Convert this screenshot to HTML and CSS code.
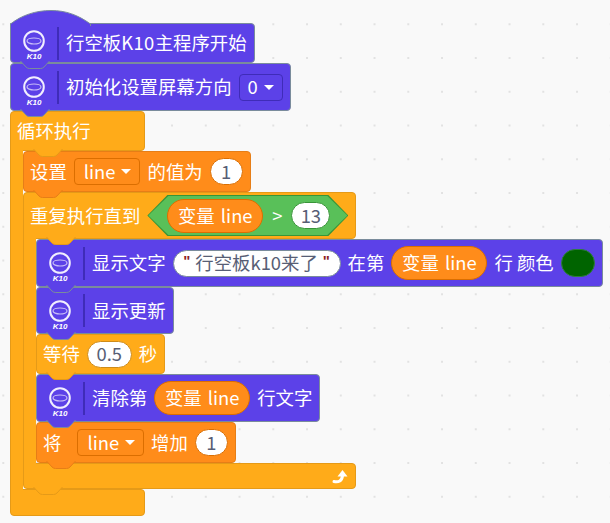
FILE: index.html
```html
<!DOCTYPE html>
<html lang="en">
<head>
    <meta charset="UTF-8">
    <title>K10</title>
    <link rel="stylesheet" href="styles.css">
</head>
<body>
<main class="stage">
    <div class="block purple hat h40">
        <svg class="hat-top" width="82" height="16" viewBox="0 0 82 16"><path d="M.5 16V14C12 5 26 .5 41 .5S68 5 80.5 14V16"/></svg>
        <span class="k10 k10-hat"><svg width="22" height="22" viewBox="0 0 22 22"><circle cx="11" cy="11" r="9.8"/><ellipse cx="11" cy="11" rx="7" ry="3"/></svg><i>K10</i></span>
        <span class="sep"></span>
        <span>行空板<span class="wide">K10</span>主程序开始</span>
        <svg class="bump" width="30" height="8" viewBox="0 0 30 8"><path d="M.5 0L6 6Q7.5 7.5 9.5 7.5H20.5Q22.5 7.5 24 6L29.5 0"/></svg>
    </div>
    <div class="block purple h48">
        <span class="k10"><svg width="22" height="22" viewBox="0 0 22 22"><circle cx="11" cy="11" r="9.8"/><ellipse cx="11" cy="11" rx="7" ry="3"/></svg><i>K10</i></span>
        <span class="sep"></span>
        <span>初始化设置屏幕方向</span>
        <span class="drop drop-short">0</span>
        <svg class="bump" width="30" height="8" viewBox="0 0 30 8"><path d="M.5 0L6 6Q7.5 7.5 9.5 7.5H20.5Q22.5 7.5 24 6L29.5 0"/></svg>
    </div>

    <div class="loop">
        <div class="block yellow head h40 w-loop">
            <span>循环执行</span>
            <svg class="bump bump-in" width="30" height="8" viewBox="0 0 30 8"><path d="M.5 0L6 6Q7.5 7.5 9.5 7.5H20.5Q22.5 7.5 24 6L29.5 0"/></svg>
        </div>
        <div class="arm">
            <div class="block orange h41">
                <span>设置</span>
                <span class="drop">line</span>
                <span>的值为</span>
                <span class="num n-one">1</span>
                <svg class="bump" width="30" height="8" viewBox="0 0 30 8"><path d="M.5 0L6 6Q7.5 7.5 9.5 7.5H20.5Q22.5 7.5 24 6L29.5 0"/></svg>
            </div>
            <div class="loop">
                <div class="block yellow head h47 w-repeat">
                    <span>重复执行直到</span>
                    <span class="hex">
                        <span class="var">变量 line</span>
                        <span class="gt">&gt;</span>
                        <span class="num n-13">13</span>
                    </span>
                    <svg class="bump bump-in" width="30" height="8" viewBox="0 0 30 8"><path d="M.5 0L6 6Q7.5 7.5 9.5 7.5H20.5Q22.5 7.5 24 6L29.5 0"/></svg>
                </div>
                <div class="arm">
                    <div class="block purple h48">
                        <span class="k10"><svg width="22" height="22" viewBox="0 0 22 22"><circle cx="11" cy="11" r="9.8"/><ellipse cx="11" cy="11" rx="7" ry="3"/></svg><i>K10</i></span>
                        <span class="sep"></span>
                        <span>显示文字</span>
                        <span class="num str"><b>"</b>行空板k10来了<b>"</b></span>
                        <span>在第</span>
                        <span class="var">变量 line</span>
                        <span>行 颜色</span>
                        <span class="swatch"></span>
                        <svg class="bump" width="30" height="8" viewBox="0 0 30 8"><path d="M.5 0L6 6Q7.5 7.5 9.5 7.5H20.5Q22.5 7.5 24 6L29.5 0"/></svg>
                    </div>
                    <div class="block purple h47">
                        <span class="k10"><svg width="22" height="22" viewBox="0 0 22 22"><circle cx="11" cy="11" r="9.8"/><ellipse cx="11" cy="11" rx="7" ry="3"/></svg><i>K10</i></span>
                        <span class="sep"></span>
                        <span>显示更新</span>
                        <svg class="bump" width="30" height="8" viewBox="0 0 30 8"><path d="M.5 0L6 6Q7.5 7.5 9.5 7.5H20.5Q22.5 7.5 24 6L29.5 0"/></svg>
                    </div>
                    <div class="block yellow h40">
                        <span>等待</span>
                        <span class="num n-half">0.5</span>
                        <span>秒</span>
                        <svg class="bump" width="30" height="8" viewBox="0 0 30 8"><path d="M.5 0L6 6Q7.5 7.5 9.5 7.5H20.5Q22.5 7.5 24 6L29.5 0"/></svg>
                    </div>
                    <div class="block purple h48">
                        <span class="k10"><svg width="22" height="22" viewBox="0 0 22 22"><circle cx="11" cy="11" r="9.8"/><ellipse cx="11" cy="11" rx="7" ry="3"/></svg><i>K10</i></span>
                        <span class="sep"></span>
                        <span>清除第</span>
                        <span class="var">变量 line</span>
                        <span>行文字</span>
                        <svg class="bump" width="30" height="8" viewBox="0 0 30 8"><path d="M.5 0L6 6Q7.5 7.5 9.5 7.5H20.5Q22.5 7.5 24 6L29.5 0"/></svg>
                    </div>
                    <div class="block orange h41">
                        <span class="jiang">将</span>
                        <span class="drop">line</span>
                        <span>增加</span>
                        <span class="num n-one">1</span>
                        <svg class="bump" width="30" height="8" viewBox="0 0 30 8"><path d="M.5 0L6 6Q7.5 7.5 9.5 7.5H20.5Q22.5 7.5 24 6L29.5 0"/></svg>
                    </div>
                </div>
                <div class="block yellow foot foot-repeat w-repeat">
                    <svg class="turn" width="16" height="15" viewBox="0 0 16 15"><path d="M2 12.5C6.5 13.5 10 12 10.5 6.5"/><path class="head" d="M5.5 7.5L10.5 1L15.5 7.5Z"/></svg>
                    <svg class="bump" width="30" height="8" viewBox="0 0 30 8"><path d="M.5 0L6 6Q7.5 7.5 9.5 7.5H20.5Q22.5 7.5 24 6L29.5 0"/></svg>
                </div>
            </div>
        </div>
        <div class="block yellow foot foot-loop w-loop"></div>
    </div>
</main>
</body>
</html>
```

FILE: styles.css
```css
* {
    box-sizing: border-box;
}
body {
    margin: 0;
    background-color: #f9f9f9;
    font-family: "Noto Sans CJK SC", "Noto Sans", sans-serif;
    font-size: 18.4px;
    color: #fff;
}
.stage {
    width: 610px;
    height: 523px;
    overflow: hidden;
    padding: 23px 0 0 10px;
    background-image: radial-gradient(circle, #e2e2e2 0, #e2e2e2 1px, transparent 1.2px);
    background-size: 33.75px 33.75px;
    background-position: -13.6px 7.4px;
}
.block {
    position: relative;
    display: flex;
    align-items: center;
    gap: 7px;
    width: fit-content;
    padding: 0 7px 0 6px;
    border: 1px solid;
    border-radius: 4px;
    white-space: nowrap;
}
/* the font sits low in its line box */
.block > span:not([class]),
.jiang,
.gt {
    padding-bottom: 2px;
}
.wide {
    letter-spacing: .4px;
}
.purple {
    background-color: #5c41e8;
    border-color: #7a8c9c;
    --edge: #7a8c9c;
    --fill: #5c41e8;
    --dark: #3f2cb8;
}
.yellow {
    background-color: #ffab19;
    border-color: #e59a18;
    --edge: #e59a18;
    --fill: #ffab19;
    --dark: #cf8b17;
}
.orange {
    background-color: #ff8c1a;
    border-color: #e67e17;
    --edge: #e67e17;
    --fill: #ff8c1a;
    --dark: #db6e00;
}
.h40 { height: 40px; }
.h41 { height: 41px; }
.h47 { height: 47px; }
.h48 { height: 48px; }
.foot-repeat { height: 26px; justify-content: flex-end; }
.foot-loop { height: 27px; }
.w-loop { width: 135px; }
.w-repeat { width: 333px; }
.head { border-bottom-left-radius: 0; }
.foot { border-top-left-radius: 0; }

/* bump under a block, sits over the next block's top edge */
.bump {
    position: absolute;
    left: 9px;
    top: 100%;
    z-index: 2;
    margin-top: -1px;
}
.bump-in {
    left: 22px;
}
.bump path {
    fill: var(--fill);
    stroke: var(--edge);
}
.hat {
    border-top-left-radius: 0;
}
.hat-top {
    position: absolute;
    left: -1px;
    bottom: 100%;
    margin-bottom: -2px;
}
.hat-top path {
    fill: #5c41e8;
    stroke: #7a8c9c;
}

.loop {
    display: flex;
    flex-direction: column;
}
/* left side of a C block, runs 1px under the head and the foot to hide their borders */
.arm {
    position: relative;
    z-index: 1;
    display: flex;
    flex-direction: column;
    width: fit-content;
    margin: -1px 0;
    padding: 1px 0 1px 13px;
    background: linear-gradient(#ffab19, #ffab19) 0 0 / 13px 100% no-repeat;
    box-shadow: inset 1px 0 0 #e59a18;
}

.k10 {
    display: flex;
    flex-direction: column;
    align-items: center;
    width: 22px;
    margin: 9px 0 0 6px;
}
.k10-hat {
    margin-top: 4px;
}
.k10 svg {
    display: block;
}
.k10 circle {
    fill: none;
    stroke: #f1eefe;
    stroke-width: 2;
}
.k10 ellipse {
    fill: none;
    stroke: #c8bdf7;
    stroke-width: 1.2;
}
.k10 i {
    font-family: "Liberation Sans", sans-serif;
    font-size: 8px;
    font-weight: bold;
    line-height: 9px;
}
.sep {
    width: 2px;
    height: 33px;
    margin-left: 5px;
    background-color: #3f2cb8;
}

.drop {
    display: flex;
    align-items: center;
    gap: 6px;
    height: 27px;
    padding: 0 8px 2px 9px;
    border: 1px solid var(--dark);
    border-radius: 4px;
}
.drop-short {
    padding: 0 8px 2px;
}
.drop::after {
    content: "";
    margin-top: 2px;
    border-left: 5px solid transparent;
    border-right: 5px solid transparent;
    border-top: 5px solid #fff;
}
.jiang {
    margin-right: 9px;
}
.num {
    display: flex;
    align-items: center;
    justify-content: center;
    height: 27px;
    padding: 0 9px 2px;
    background-color: #fff;
    border: 1px solid var(--dark);
    border-radius: 14px;
    color: #575e75;
}
.n-one { width: 33px; }
.n-half { width: 45px; }
.n-13 { width: 39px; }
.str {
    width: 168px;
    border-color: #7a8c9c;
}
.str b {
    font-family: "Liberation Sans", sans-serif;
    font-size: 15px;
    color: #8e1f1f;
    margin: -4px 5px 0;
}
.var {
    display: flex;
    align-items: center;
    justify-content: center;
    width: 96px;
    height: 34px;
    padding-bottom: 2px;
    background-color: #ff8c1a;
    border: 1px solid #db6e00;
    border-radius: 17px;
    word-spacing: 2px;
}
.swatch {
    width: 34px;
    height: 28px;
    background-color: #006400;
    border: 1px solid #2f7d3f;
    border-radius: 14px;
}

.hex {
    position: relative;
    display: flex;
    align-items: center;
    gap: 9px;
    width: 201px;
    height: 41px;
    padding: 0 18px 0 20px;
    background-color: #389438;
    clip-path: polygon(20px 0, calc(100% - 20px) 0, 100% 50%, calc(100% - 20px) 100%, 20px 100%, 0 50%);
}
.hex::before {
    content: "";
    position: absolute;
    inset: 1px;
    background-color: #59c059;
    clip-path: polygon(20px 0, calc(100% - 20px) 0, 100% 50%, calc(100% - 20px) 100%, 20px 100%, 0 50%);
}
.hex > span {
    position: relative;
}
.hex .num {
    border-color: #389438;
}
.turn {
    fill: none;
    stroke: #fff;
    stroke-width: 3;
    stroke-linecap: round;
}
.turn .head {
    fill: #fff;
    stroke: none;
}
```
